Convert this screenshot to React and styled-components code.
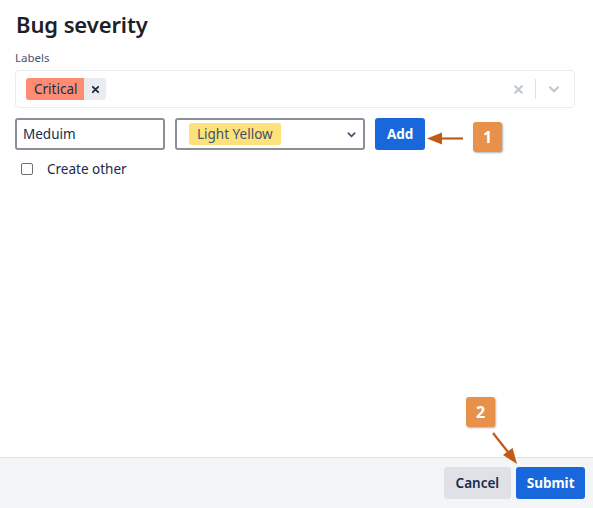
import React from 'react';
import styled, { createGlobalStyle } from 'styled-components';

const GlobalStyle = createGlobalStyle`
  html, body {
    margin: 0;
    padding: 0;
    background: #ffffff;
  }
  body {
    font-family: "Noto Sans", "Open Sans", sans-serif;
    color: #172b4d;
  }
`;

const ChevronDown = ({ color = '#172b4d', size = 12 }) => (
  <svg width={size} height={size} viewBox="0 0 12 12" fill="none">
    <path d="M2.5 4.5 L6 8 L9.5 4.5" stroke={color} strokeWidth="1.8" strokeLinecap="round" strokeLinejoin="round" />
  </svg>
);

const CrossIcon = ({ color = '#172b4d', size = 10, weight = 1.8 }) => (
  <svg width={size} height={size} viewBox="0 0 10 10" fill="none">
    <path d="M2 2 L8 8 M8 2 L2 8" stroke={color} strokeWidth={weight} strokeLinecap="round" />
  </svg>
);

const App = () => {
  return (
    <Page>
      <GlobalStyle />
      <Main>
        <Title>Bug severity</Title>
        <FieldLabel>Labels</FieldLabel>
        <MultiSelect>
          <Chips>
            <Chip>
              <ChipText color="#fd8c73">Critical</ChipText>
              <ChipRemove>
                <CrossIcon size={9} weight={2} />
              </ChipRemove>
            </Chip>
          </Chips>
          <Indicators>
            <CrossIcon color="#c1c7d0" size={11} weight={2} />
            <Separator />
            <ChevronDown color="#c1c7d0" size={14} />
          </Indicators>
        </MultiSelect>

        <AddRow>
          <TextInput defaultValue="Meduim" />
          <ColourSelect>
            <Lozenge color="#fde17a">Light Yellow</Lozenge>
            <ChevronDown color="#42526e" size={11} />
          </ColourSelect>
          <PrimaryButton>Add</PrimaryButton>
        </AddRow>

        <CheckRow>
          <CheckBox />
          <CheckLabel>Create other</CheckLabel>
        </CheckRow>
      </Main>

      <Footer>
        <SecondaryButton>Cancel</SecondaryButton>
        <PrimaryButton footer>Submit</PrimaryButton>
      </Footer>

      <Badge style={{ left: 473, top: 122 }}>1</Badge>
      <Badge style={{ left: 466, top: 397 }}>2</Badge>
      <Arrows width="593" height="508" viewBox="0 0 593 508">
        <path d="M463 138.5 L440 138.5" stroke="#c05a16" strokeWidth="2.2" />
        <path d="M427 138.5 L442 132.5 L442 144.5 Z" fill="#c05a16" />
        <path d="M493 433 L508 452" stroke="#c05a16" strokeWidth="2.2" />
        <path d="M517 464 L503 455 L512.5 448 Z" fill="#c05a16" />
      </Arrows>
    </Page>
  );
};

const Page = styled.div`
  position: relative;
  height: 508px;
  display: flex;
  flex-direction: column;
  overflow: hidden;
`;

const Main = styled.div`
  flex: 1;
  padding: 9px 18px 0 15px;
`;

const Title = styled.h1`
  margin: 0 0 0 1px;
  font-size: 22px;
  line-height: 31px;
  font-weight: 600;
  color: #1d2125;
  letter-spacing: -0.1px;
`;

const FieldLabel = styled.div`
  margin-top: 10px;
  font-size: 11.5px;
  line-height: 16px;
  color: #44546f;
`;

const MultiSelect = styled.div`
  margin-top: 4px;
  height: 38px;
  box-sizing: border-box;
  border: 1px solid #ebecf0;
  border-radius: 4px;
  display: flex;
  align-items: center;
  justify-content: space-between;
  padding: 0 10px;
`;

const Chips = styled.div`
  display: flex;
  gap: 4px;
`;

const Chip = styled.div`
  display: flex;
  height: 22px;
  border-radius: 3px;
  overflow: hidden;
`;

const ChipText = styled.span`
  background: ${(p) => p.color};
  padding: 0 7px 0 8px;
  font-size: 13.5px;
  line-height: 22px;
  color: #172b4d;
`;

const ChipRemove = styled.span`
  width: 22px;
  background: #ebecf0;
  display: flex;
  align-items: center;
  justify-content: center;
`;

const Indicators = styled.div`
  display: flex;
  align-items: center;
  gap: 11px;
  padding-right: 3px;
`;

const Separator = styled.span`
  width: 1px;
  height: 20px;
  background: #dfe1e6;
`;

const AddRow = styled.div`
  margin-top: 10px;
  display: flex;
  align-items: center;
`;

const TextInput = styled.input`
  width: 150px;
  height: 32px;
  box-sizing: border-box;
  border: 2px solid #8c8f97;
  border-radius: 3px;
  padding: 0 6px;
  font-family: inherit;
  font-size: 13.5px;
  color: #172b4d;
  outline: none;
`;

const ColourSelect = styled.div`
  margin-left: 10px;
  width: 190px;
  height: 32px;
  box-sizing: border-box;
  border: 2px solid #8c8f97;
  border-radius: 3px;
  display: flex;
  align-items: center;
  justify-content: space-between;
  padding: 0 6px 0 12px;
`;

const Lozenge = styled.span`
  background: ${(p) => p.color};
  border-radius: 3px;
  padding: 0 8px;
  font-size: 13.5px;
  line-height: 22px;
  color: #42526e;
`;

const PrimaryButton = styled.button`
  margin-left: ${(p) => (p.footer ? '5px' : '10px')};
  height: 32px;
  border: none;
  border-radius: 3px;
  background: #1868db;
  color: #ffffff;
  font-family: inherit;
  font-size: 13.5px;
  font-weight: 700;
  padding: 0 ${(p) => (p.footer ? '10.5px' : '12px')};
`;

const SecondaryButton = styled.button`
  height: 32px;
  border: none;
  border-radius: 3px;
  background: #dfe1e6;
  color: #172b4d;
  font-family: inherit;
  font-size: 13.5px;
  font-weight: 600;
  padding: 0 12px;
`;

const CheckRow = styled.div`
  margin-top: 9px;
  display: flex;
  align-items: center;
  padding-left: 6px;
`;

const CheckBox = styled.span`
  width: 12px;
  height: 12px;
  box-sizing: border-box;
  border: 1.5px solid #6b6e76;
  border-radius: 2px;
`;

const CheckLabel = styled.span`
  margin-left: 14px;
  font-size: 13.5px;
  line-height: 20px;
  color: #172b4d;
`;

const Footer = styled.div`
  height: 51px;
  box-sizing: border-box;
  border-top: 1px solid #dcdfe4;
  background: #f4f5f7;
  display: flex;
  align-items: center;
  justify-content: flex-end;
  padding: 0 8px 0 0;
`;

const Badge = styled.div`
  position: absolute;
  width: 29px;
  height: 30px;
  border-radius: 3px;
  background: #e8914a;
  color: #ffffff;
  font-size: 16px;
  font-weight: 700;
  display: flex;
  align-items: center;
  justify-content: center;
  box-shadow: 1px 1px 2px rgba(0, 0, 0, 0.3);
`;

const Arrows = styled.svg`
  position: absolute;
  left: 0;
  top: 0;
  pointer-events: none;
`;

export default App;
